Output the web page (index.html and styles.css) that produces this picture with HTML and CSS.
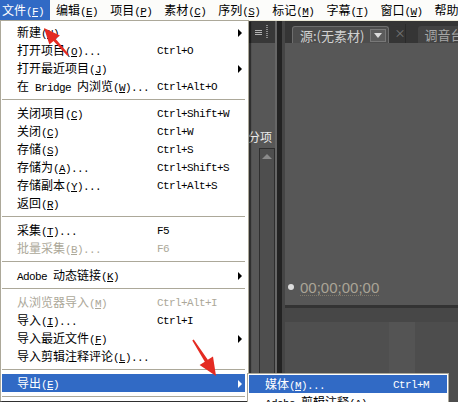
FILE: index.html
```html
<!DOCTYPE html>
<html lang="zh-CN">
<head>
<meta charset="utf-8">
<title>Premiere Pro - 文件菜单</title>
<link rel="stylesheet" href="styles.css">
</head>
<body>
<div class="app">

<div class="menubar">
<span class="mb-item open">文件<span class="lat">(<u>F</u>)</span></span>
<span class="mb-item">编辑<span class="lat">(<u>E</u>)</span></span>
<span class="mb-item">项目<span class="lat">(<u>P</u>)</span></span>
<span class="mb-item">素材<span class="lat">(<u>C</u>)</span></span>
<span class="mb-item">序列<span class="lat">(<u>S</u>)</span></span>
<span class="mb-item">标记<span class="lat">(<u>M</u>)</span></span>
<span class="mb-item">字幕<span class="lat">(<u>T</u>)</span></span>
<span class="mb-item">窗口<span class="lat">(<u>W</u>)</span></span>
<span class="mb-item last">帮助</span>
</div>

<div class="workspace">
  <div class="project">
    <div class="panel-head"><span class="hamb"></span><span class="grip"></span></div>
    <div class="project-body">
      <div class="proj-label">分项</div>
      <div class="scroll"><span class="up"></span></div>
    </div>
  </div>
  <div class="divider"></div>
  <div class="source">
    <div class="tabs">
      <span class="grip"></span>
      <span class="tab active">源:(无素材)<span class="dd"><span class="down"></span></span></span>
      <span class="close">×</span>
      <span class="tab">调音台</span>
    </div>
    <div class="monitor"></div>
    <div class="tc-row"><span class="tc-dot"></span><span class="tc">00;00;00;00</span></div>
    <div class="track-bar"></div>
    <div class="track-area"></div>
  </div>
</div>

<div class="dropdown">
  <div class="item"><span>新建<span class="lat">(<u>N</u>)</span></span><span></span><span class="sub"></span></div>
  <div class="item"><span>打开项目<span class="lat">(<u>O</u>)...</span></span><span class="lat">Ctrl+O</span><span></span></div>
  <div class="item"><span>打开最近项目<span class="lat">(<u>J</u>)</span></span><span></span><span class="sub"></span></div>
  <div class="item"><span>在<span class="lat"> Bridge </span>内浏览<span class="lat">(<u>W</u>)...</span></span><span class="lat">Ctrl+Alt+O</span><span></span></div>
  <div class="sep"></div>
  <div class="item"><span>关闭项目<span class="lat">(<u>C</u>)</span></span><span class="lat">Ctrl+Shift+W</span><span></span></div>
  <div class="item"><span>关闭<span class="lat">(<u>C</u>)</span></span><span class="lat">Ctrl+W</span><span></span></div>
  <div class="item"><span>存储<span class="lat">(<u>S</u>)</span></span><span class="lat">Ctrl+S</span><span></span></div>
  <div class="item"><span>存储为<span class="lat">(<u>A</u>)...</span></span><span class="lat">Ctrl+Shift+S</span><span></span></div>
  <div class="item"><span>存储副本<span class="lat">(<u>Y</u>)...</span></span><span class="lat">Ctrl+Alt+S</span><span></span></div>
  <div class="item"><span>返回<span class="lat">(<u>R</u>)</span></span><span></span><span></span></div>
  <div class="sep"></div>
  <div class="item"><span>采集<span class="lat">(<u>T</u>)...</span></span><span class="lat">F5</span><span></span></div>
  <div class="item off"><span>批量采集<span class="lat">(<u>B</u>)...</span></span><span class="lat">F6</span><span></span></div>
  <div class="sep"></div>
  <div class="item"><span><span class="lat">Adobe </span>动态链接<span class="lat">(<u>K</u>)</span></span><span></span><span class="sub"></span></div>
  <div class="sep"></div>
  <div class="item off"><span>从浏览器导入<span class="lat">(<u>M</u>)</span></span><span class="lat">Ctrl+Alt+I</span><span></span></div>
  <div class="item"><span>导入<span class="lat">(<u>I</u>)...</span></span><span class="lat">Ctrl+I</span><span></span></div>
  <div class="item"><span>导入最近文件<span class="lat">(<u>F</u>)</span></span><span></span><span class="sub"></span></div>
  <div class="item"><span>导入剪辑注释评论<span class="lat">(<u>L</u>)...</span></span><span></span><span></span></div>
  <div class="sep"></div>
  <div class="item hot"><span>导出<span class="lat">(<u>E</u>)</span></span><span></span><span class="sub"></span></div>
  <div class="sep"></div>
</div>

<div class="submenu">
  <div class="item hot"><span>媒体<span class="lat">(<u>M</u>)...</span></span><span class="lat">Ctrl+M</span></div>
  <div class="item"><span><span class="lat">Adobe </span>剪辑注释<span class="lat">(<u>A</u>)...</span></span><span></span></div>
</div>

<svg class="arrows" width="458" height="402" viewBox="0 0 458 402">
  <polygon points="44,28 59.9,35.4 55.7,39 68.8,54.3 67.3,55.7 53.5,41 49.4,44.6"/>
  <polygon points="216,376 199.6,365.1 204.8,361.8 192.3,340.4 193.7,339.6 207.8,359.8 213,356.5"/>
</svg>

</div>
</body>
</html>
```

FILE: styles.css
```css
/* Premiere Pro - 文件菜单 (XP style)
*/

html, body
{ margin: 0;
  padding: 0;
}

body
{ width: 458px;
  height: 402px;
  overflow: hidden;
  background: #575757;
  font-family: "Noto Sans CJK SC", "Liberation Sans", sans-serif;
  font-size: 12px;
  color: #000;
}

.app
{ position: relative;
  display: flex;
  flex-direction: column;
  height: 402px;
}

/* latin text in the menus is a fixed 6px cell */
.lat
{ font-family: "Liberation Mono", monospace;
  font-size: 11px;
  letter-spacing: -0.6px;
}

/* Menu bar */

.menubar
{ display: flex;
  flex: none;
  height: 20px;
  line-height: 20px;
  background: #fcfcfa;
  border-bottom: 1px solid #ece9d8;
  white-space: nowrap;
  overflow: hidden;
}

.mb-item
{ padding: 0 6px;
}

.mb-item.open
{ padding-left: 2px;
  background: #316ac5;
  color: #fff;
}

.mb-item.last
{ padding-right: 0;
}

/* Workspace panels */

.workspace
{ display: flex;
  flex: 1;
  min-height: 0;
}

.project
{ width: 275px;
  display: flex;
  flex-direction: column;
  background: #575757;
  border-right: 2px solid #666;
}

.panel-head
{ height: 22px;
  display: flex;
  justify-content: flex-end;
  align-items: center;
  gap: 4px;
  padding-right: 7px;
  background: #383838;
}

.hamb
{ width: 7px;
  height: 5px;
  background: repeating-linear-gradient(#b4b4b4 0 1px, transparent 1px 2px);
}

.grip
{ width: 2px;
  height: 14px;
  background: repeating-linear-gradient(#8c8c8c 0 1px, transparent 1px 2px);
}

.project-body
{ flex: 1;
  display: flex;
  flex-direction: column;
  align-items: flex-end;
}

.proj-label
{ margin-top: 87px;
  padding-right: 3px;
  line-height: 14px;
  color: #ececec;
}

.scroll
{ flex: 1;
  width: 14px;
  margin-top: 4px;
  border: 1px solid #2e2e2e;
  border-bottom: none;
  background: #4e4e4e;
  display: flex;
  justify-content: center;
}

.up
{ margin-top: 5px;
  width: 0;
  height: 0;
  border-left: 5px solid transparent;
  border-right: 5px solid transparent;
  border-bottom: 5px solid #8a8a8a;
}

.divider
{ width: 5px;
  background: #232323;
  border-right: 3px solid #454545;
}

.source
{ flex: 1;
  min-width: 0;
  display: flex;
  flex-direction: column;
}

.tabs
{ flex: none;
  height: 22px;
  display: flex;
  align-items: flex-end;
  padding-left: 1px;
  background: #353535;
  white-space: nowrap;
  overflow: hidden;
}

.tabs .grip
{ align-self: center;
  margin-right: 6px;
}

.tab
{ height: 17px;
  line-height: 17px;
  padding: 0 6px;
  color: #a6a6a6;
  font-size: 13px;
  background: #434343;
  border-radius: 3px 3px 0 0;
}

.tab.active
{ display: flex;
  align-items: center;
  height: 16px;
  padding: 0 2px 0 7px;
  color: #d2d2d2;
  background: #4d4d4d;
  border: 1px solid #6e6e6e;
  border-bottom: none;
}

.dd
{ margin-left: 6px;
  width: 14px;
  height: 11px;
  background: #5c5c5c;
  border: 1px solid #787878;
  display: flex;
  justify-content: center;
  align-items: center;
}

.down
{ width: 0;
  height: 0;
  border-left: 4px solid transparent;
  border-right: 4px solid transparent;
  border-top: 5px solid #dcdcdc;
}

.close
{ width: 22px;
  height: 19px;
  line-height: 19px;
  padding-left: 5px;
  color: #7c7c7c;
  font-size: 11px;
  border-right: 1px solid #2a2a2a;
  box-sizing: border-box;
}

.tabs .tab:last-child
{ margin-left: 12px;
}

.monitor
{ flex: 1;
  background: #575757;
}

.tc-row
{ height: 20px;
  margin-bottom: 7px;
  display: flex;
  align-items: center;
  gap: 6px;
  padding-left: 3px;
  background: #575757;
}

.tc-dot
{ width: 6px;
  height: 6px;
  border-radius: 50%;
  background: #dcdcdc;
  margin-top: -3px;
}

.tc
{ font-family: "Liberation Sans", sans-serif;
  font-size: 15px;
  line-height: 15px;
  color: #aaa496;
  border-bottom: 1px dotted #807a6c;
}

.track-bar
{ height: 14px;
  border-top: 3px solid #333;
  background: #474747;
}

.track-area
{ height: 80px;
  background: linear-gradient(90deg, #4f4f4f 0 60%, #545454 60% 75%, #4d4d4d 75%);
}

/* Drop-down menu */

.dropdown
{ position: absolute;
  left: 0;
  top: 20px;
  width: 249px;
  box-sizing: border-box;
  padding: 2px 3px 0 1px;
  background: #fff;
  border: 1px solid #aca899;
  border-bottom: none;
  box-shadow: 2px 2px 1px rgba(0, 0, 0, 0.45);
  white-space: nowrap;
}

.item
{ display: grid;
  grid-template-columns: 140px 1fr 14px;
  align-items: center;
  height: 18px;
  line-height: 18px;
  padding-left: 15px;
}

.item.off
{ color: #aca899;
}

.item.hot
{ background: #316ac5;
  color: #fff;
}

.sub
{ justify-self: end;
  margin-right: 3px;
  width: 0;
  height: 0;
  border-top: 4px solid transparent;
  border-bottom: 4px solid transparent;
  border-left: 4px solid #000;
}

.item.hot .sub
{ border-left-color: #fff;
}

.sep
{ height: 9px;
  background: linear-gradient(#aca899, #aca899) center / 100% 1px no-repeat;
}

.submenu
{ position: absolute;
  left: 247px;
  top: 373px;
  width: 202px;
  box-sizing: border-box;
  padding: 1px;
  background: #fff;
  border: 1px solid #aca899;
  white-space: nowrap;
}

.submenu .item
{ grid-template-columns: 128px 1fr;
  padding-left: 16px;
}

/* red annotation arrows */

.arrows
{ position: absolute;
  left: 0;
  top: 0;
  pointer-events: none;
  fill: #e42b22;
}
```
